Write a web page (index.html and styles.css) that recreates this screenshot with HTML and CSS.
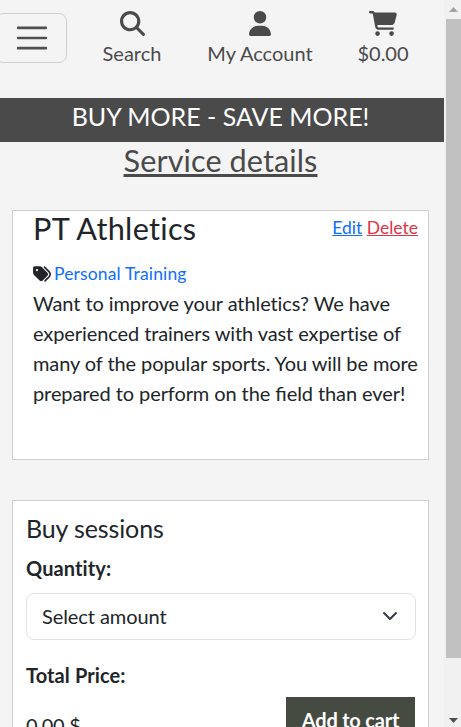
FILE: index.html
```html
<!DOCTYPE html>
<html lang="en">
<head>
<meta charset="utf-8">
<title>Service details</title>
<link rel="stylesheet" href="styles.css">
</head>
<body>
<div class="window">
  <main class="page">
    <header class="topbar">
      <button class="toggler" aria-label="Menu">
        <svg width="38" height="38" viewBox="0 0 30 30"><path d="M4 7h22M4 15h22M4 23h22" stroke="#4e4f50" stroke-width="2" stroke-linecap="round" stroke-miterlimit="10"/></svg>
      </button>
      <a class="nav-item search">
        <svg width="25" height="25" viewBox="0 0 512 512"><path d="M416 208c0 45.900-14.900 88.300-40 122.700L502.600 457.400c12.500 12.500 12.500 32.800 0 45.300s-32.800 12.500-45.300 0L330.700 376c-34.400 25.200-76.800 40-122.700 40C93.100 416 0 322.900 0 208S93.100 0 208 0S416 93.100 416 208zM208 352a144 144 0 1 0 0-288 144 144 0 1 0 0 288z"/></svg>
        <span>Search</span>
      </a>
      <a class="nav-item account">
        <svg width="22" height="25" viewBox="0 0 448 512"><path d="M224 256A128 128 0 1 0 224 0a128 128 0 1 0 0 256zm-45.700 48C79.800 304 0 383.800 0 482.300C0 498.700 13.300 512 29.700 512H418.300c16.400 0 29.700-13.300 29.700-29.700C448 383.800 368.200 304 269.700 304H178.300z"/></svg>
        <span>My Account</span>
      </a>
      <a class="nav-item cart">
        <svg width="28" height="25" viewBox="0 0 576 512"><path d="M0 24C0 10.700 10.700 0 24 0H69.500c22 0 41.500 12.800 50.600 32h411c26.300 0 45.500 25 38.600 50.400l-41 152.300c-8.500 31.400-37 53.300-69.500 53.300H170.700l5.400 28.500c2.200 11.300 12.100 19.500 23.600 19.500H488c13.300 0 24 10.700 24 24s-10.700 24-24 24H199.700c-34.600 0-64.300-24.600-70.700-58.500L77.400 54.500c-.7-3.800-4-6.500-7.900-6.500H24C10.700 48 0 37.300 0 24zM128 464a48 48 0 1 1 96 0 48 48 0 1 1-96 0zm336-48a48 48 0 1 1 0 96 48 48 0 1 1 0-96z"/></svg>
        <span>$0.00</span>
      </a>
    </header>
    <div class="banner">BUY MORE - SAVE MORE!</div>
    <h2 class="page-title">Service details</h2>
    <section class="card service">
      <div class="service-head">
        <h3>PT Athletics</h3>
        <div class="actions"><a class="edit">Edit</a> <a class="delete">Delete</a></div>
      </div>
      <div class="category">
        <svg width="18" height="16" viewBox="0 0 512 460"><path d="M345 39L472.800 168.400c52.400 53 52.400 138.200 0 191.200L360.800 472.900c-9.300 9.400-24.500 9.500-33.900 .2s-9.500-24.500-.2-33.900L438.600 325.900c33.900-34.300 33.900-89.400 0-123.700L310.900 72.900c-9.300-9.400-9.200-24.600 .2-33.900s24.600-9.200 33.900 .2zM0 229.500V80C0 53.500 21.500 32 48 32H197.500c17 0 33.300 6.700 45.300 18.700l168 168c25 25 25 65.500 0 90.500L277.300 442.700c-25 25-65.500 25-90.500 0l-168-168C6.700 262.700 0 246.500 0 229.500zM144 144a32 32 0 1 0-64 0 32 32 0 1 0 64 0z" transform="translate(0 -26)"/></svg>
        <a>Personal Training</a>
      </div>
      <p>Want to improve your athletics? We have experienced trainers with vast expertise of many of the popular sports. You will be more prepared to perform on the <span class="liga">fi</span>eld than ever!</p>
    </section>
    <section class="card buy">
      <h4>Buy sessions</h4>
      <div class="label">Quantity:</div>
      <div class="select">
        <span>Select amount</span>
        <svg width="16" height="16" viewBox="0 0 16 16"><path fill="none" stroke="#343a40" stroke-linecap="round" stroke-linejoin="round" stroke-width="2" d="m2 5 6 6 6-6"/></svg>
      </div>
      <div class="label total">Total Price:</div>
      <div class="checkout">
        <span class="price">0.00 $</span>
        <button class="add">Add to cart</button>
      </div>
    </section>
  </main>
  <div class="scrollbar">
    <svg width="9" height="5" viewBox="0 0 9 5"><path d="M0 5 4.500 0 9 5z" fill="#a3a3a3"/></svg>
    <div class="thumb"></div>
    <svg width="9" height="5" viewBox="0 0 9 5"><path d="M0 0 4.500 5 9 0z" fill="#505050"/></svg>
  </div>
</div>
</body>
</html>
```
FILE: styles.css
```css
* { box-sizing: border-box; }
body {
  margin: 0;
  height: 727px;
  overflow: hidden;
  background: #f4f4f4;
  color: #212529;
  font: 400 20px/30px Lato, sans-serif;
  font-variant-ligatures: none;
}
h2, h3, h4, p { margin: 0; font-weight: 400; }
svg { display: block; flex: none; }
.window { display: flex; height: 727px; overflow: hidden; }
.page { width: 444px; flex: none; }
.topbar { display: flex; height: 98px; color: #4a4a4a; fill: #4a4a4a; }
.toggler {
  width: 72px;
  height: 50px;
  margin: 13px 0 0 -5px;
  padding: 0 0 0 2px;
  display: flex;
  align-items: center;
  justify-content: center;
  background: none;
  border: 1px solid #d0d0d0;
  border-radius: 8px;
}
.nav-item {
  display: flex;
  flex-direction: column;
  align-items: center;
  padding-top: 11px;
  white-space: nowrap;
}
.nav-item span { margin-top: 2px; }
.search { width: 60px; margin-left: 35px; }
.account { width: 106px; margin-left: 45px; }
.cart { width: 50px; margin-left: 45px; }
.banner {
  height: 44px;
  padding-right: 3px;
  background: #4a4a4a;
  color: #fff;
  font-size: 25px;
  line-height: 36px;
  text-align: center;
}
.page-title {
  height: 68px;
  padding-right: 3px;
  color: #4a4a4a;
  font-size: 30.65px;
  line-height: 37px;
  letter-spacing: 0.08px;
  text-align: center;
  text-decoration: underline;
  text-decoration-thickness: 3px;
}
.card {
  width: 417px;
  margin-left: 12px;
  background: #fff;
  border: 1px solid #cfcfcf;
}
.service { height: 250px; padding: 0 10px 0 20px; }
.service-head { display: flex; justify-content: space-between; height: 48px; }
.service h3 { font-size: 30.65px; line-height: 35px; letter-spacing: 0.3px; }
.actions { font-size: 17.5px; line-height: 34px; }
.actions a { text-decoration: underline; }
.edit, .category a { color: #0d6efd; }
.delete { color: #dc3545; }
.category {
  display: flex;
  align-items: center;
  gap: 3px;
  height: 29px;
  padding-top: 1px;
  font-size: 17.5px;
  letter-spacing: 0.15px;
  fill: #212529;
}
.service p { width: 390px; letter-spacing: -0.09px; }
.liga { font-variant-ligatures: common-ligatures; letter-spacing: 0; }
.buy { height: 280px; margin-top: 40px; padding: 12px 12px 0 13px; }
.buy h4 { font-size: 25px; line-height: 30px; letter-spacing: -0.12px; }
.label { margin-top: 10px; font-weight: 700; letter-spacing: 0.1px; }
.select {
  display: flex;
  align-items: center;
  justify-content: space-between;
  height: 47px;
  margin-top: 10px;
  padding: 0 17px 1px 15px;
  border: 1px solid #dee2e6;
  border-radius: 8px;
  letter-spacing: -0.08px;
}
.total { margin-top: 20px; }
.checkout { display: flex; justify-content: space-between; margin-top: 7px; }
.price { padding-top: 13px; letter-spacing: -0.3px; }
.add {
  width: 129px;
  height: 47px;
  margin-right: 1px;
  padding: 0;
  border: 0;
  background: #454b40;
  color: #fff;
  font: 700 20px/47px Lato, sans-serif;
  letter-spacing: -0.2px;
}
.scrollbar {
  display: flex;
  flex-direction: column;
  align-items: center;
  width: 17px;
  padding: 7px 0 4px 2px;
  background: #f1f1f1;
}
.thumb { width: 15px; height: 639px; margin: 7px 0 auto; background: #c1c1c1; }
```
